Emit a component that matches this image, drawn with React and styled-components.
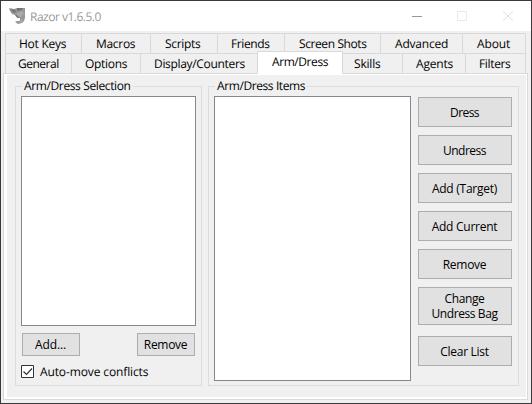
import React from "react";
import styled, { createGlobalStyle } from "styled-components";

const Global = createGlobalStyle`
  * { box-sizing: border-box; }
  body { margin: 0; font: 12px/15px "Open Sans", "Noto Sans", sans-serif; color: #000; overflow: hidden; text-rendering: geometricPrecision; }
  button { font: inherit; color: inherit; }
`;

const Window = styled.div`
  width: 532px;
  height: 404px;
  display: flex;
  flex-direction: column;
  background: #f0f0f0;
  border: 1px solid #3b3939;
`;

const TitleBar = styled.header`
  flex: 0 0 30px;
  display: flex;
  align-items: center;
  background: #fff;
  color: #999;
  padding: 0 12px 0 8px;
`;

const Title = styled.span`
  margin: 0 auto 0 5px;
  letter-spacing: ${(p) => p.$track}px;
`;

const Controls = styled.svg`
  display: block;
`;

const Tabs = styled.nav`
  padding: 2px 0 0 4px;
`;

const TabRow = styled.div`
  display: flex;
  height: 20px;
  width: 521px;
  border: solid #d9d9d9;
  border-width: 1px 1px 0;
`;

const Tab = styled.div`
  flex: 0 0 ${(p) => p.$w}px;
  padding: 2px 0 0 ${(p) => p.$pad}px;
  letter-spacing: ${(p) => p.$track || 0}px;
  white-space: nowrap;
  border-left: 1px solid #d9d9d9;
  &:first-child { border-left: 0; }
  ${(p) =>
    p.$active &&
    `
    position: relative;
    z-index: 1;
    height: 23px;
    margin-top: -3px;
    background: #fff;
    border: 1px solid #d9d9d9;
    border-bottom: 0;
    & + div { border-left: 0; }
  `}
`;

const Pane = styled.main`
  flex: none;
  width: 525px;
  height: 327px;
  margin-left: 2px;
  border: 1px solid #d9d9d9;
  background: #fff;
  padding: 1px 1px 2px 3px;
`;

const PaneBody = styled.div`
  height: 100%;
  display: flex;
  gap: 6px;
  padding: 11px 0 0 8px;
  background: #f0f0f0;
`;

const Group = styled.section`
  width: ${(p) => p.$w}px;
  height: 300px;
  border: 1px solid #dcdcdc;
  padding: 0 5px;
`;

const Legend = styled.h2`
  width: max-content;
  height: 15px;
  margin: -9px 0 3px 1px;
  padding: 0 2px;
  font: inherit;
  background: #f0f0f0;
  letter-spacing: ${(p) => p.$track}px;
`;

const ListBox = styled.div`
  width: ${(p) => p.$w}px;
  height: ${(p) => p.$h}px;
  background: #fff;
  border: 1px solid #828790;
`;

const Button = styled.button`
  display: block;
  width: ${(p) => p.$w}px;
  height: ${(p) => p.$h}px;
  padding: 0 1px 0 0;
  background: #e1e1e1;
  border: 1px solid #adadad;
  letter-spacing: ${(p) => p.$track || 0}px;
  white-space: pre-line;
`;

const ListActions = styled.div`
  display: flex;
  justify-content: space-between;
  padding: 7px 0 0 1px;
  width: 174px;
`;

const CheckRow = styled.label`
  display: flex;
  align-items: center;
  gap: 6px;
  margin-top: 8px;
  letter-spacing: ${(p) => p.$track}px;
`;

const ItemsLayout = styled.div`
  display: flex;
  gap: 7px;
`;

const ButtonColumn = styled.div`
  display: flex;
  flex-direction: column;
  padding-top: 1px;
  gap: 8px;
  & > :last-child { margin-top: 3px; }
`;

const topTabs = [
  ["Hot Keys", 75, 13, -0.25],
  ["Macros", 69, 14, -0.3],
  ["Scripts", 67, 14, -0.3],
  ["Friends", 67, 13, -0.4],
  ["Screen Shots", 96, 14, -0.4],
  ["Advanced", 82, 14, -0.2],
  ["About", 63, 14, -0.1],
];

const bottomTabs = [
  ["General", 65, 12, -0.5],
  ["Options", 69, 13, -0.3],
  ["Display/Counters", 117, 13, -0.32],
  ["Arm/Dress", 86, 14, -0.42],
  ["Skills", 59, 11, -0.2],
  ["Agents", 63, 13, -0.2],
  ["Filters", 60, 13, -0.35],
];

const itemActions = [
  ["Dress", 30, -0.6],
  ["Undress", 30, -0.5],
  ["Add (Target)", 30, -0.25],
  ["Add Current", 30, -0.25],
  ["Remove", 30, -0.25],
  ["Change\nUndress Bag", 38, -0.4],
  ["Clear List", 30, -0.3],
];

const renderTabs = (tabs) =>
  tabs.map(([name, w, pad, track]) => (
    <Tab key={name} $w={w} $pad={pad} $track={track} $active={name === "Arm/Dress"}>
      {name}
    </Tab>
  ));

const Logo = () => (
  <svg width="16" height="16" viewBox="0 0 16 16">
    <path d="M0 0 5 1 8 0 16 0 16 10 15 13 13 15 9 16 6 14 8 13 11 13 11 10 8 10 6 7 3 6 1 3Z" fill="#979797" />
    <path d="m1 1 5 1 1 2-2 1Zm7-1 6 0-1 2-5 1Z" fill="#747474" />
    <path d="m8 5 5-2 2 2-3 4-4-1Zm2 8 3-2 1 1-2 3Z" fill="#aaa" />
    <path d="m6 7 2 0 3 3-2 0Z" fill="#808080" />
  </svg>
);

export default function App() {
  return (
    <>
      <Global />
      <Window>
        <TitleBar>
          <Logo />
          <Title $track={-0.5}>Razor v1.6.5.0</Title>
          <Controls width="108" height="12" viewBox="0 0 108 12" fill="none">
            <path d="M1 6.500h10" stroke="#999" />
            <path d="M46.500 1.500h9v9h-9Z" stroke="#eaeaea" />
            <path d="m92 1 10 10m0-10-10 10" stroke="#e2e2e2" />
          </Controls>
        </TitleBar>
        <Tabs>
          <TabRow>{renderTabs(topTabs)}</TabRow>
          <TabRow>{renderTabs(bottomTabs)}</TabRow>
        </Tabs>
        <Pane>
          <PaneBody>
            <Group $w={187}>
              <Legend $track={-0.37}>Arm/Dress Selection</Legend>
              <ListBox $w={175} $h={230} />
              <ListActions>
                <Button $w={58} $h={23} $track={-0.1}>Add...</Button>
                <Button $w={58} $h={23} $track={-0.3}>Remove</Button>
              </ListActions>
              <CheckRow $track={-0.12}>
                <svg width="13" height="13" fill="none">
                  <path d="M.5.5h12v12H.5Z" fill="#fff" stroke="#333" />
                  <path d="m2.500 6.500 3 3 5.500-6" stroke="#333" strokeWidth="1.200" />
                </svg>
                Auto-move conflicts
              </CheckRow>
            </Group>
            <Group $w={311}>
              <Legend $track={-0.4}>Arm/Dress Items</Legend>
              <ItemsLayout>
                <ListBox $w={197} $h={285} />
                <ButtonColumn>
                  {itemActions.map(([name, h, track]) => (
                    <Button key={name} $w={94} $h={h} $track={track}>{name}</Button>
                  ))}
                </ButtonColumn>
              </ItemsLayout>
            </Group>
          </PaneBody>
        </Pane>
      </Window>
    </>
  );
}
